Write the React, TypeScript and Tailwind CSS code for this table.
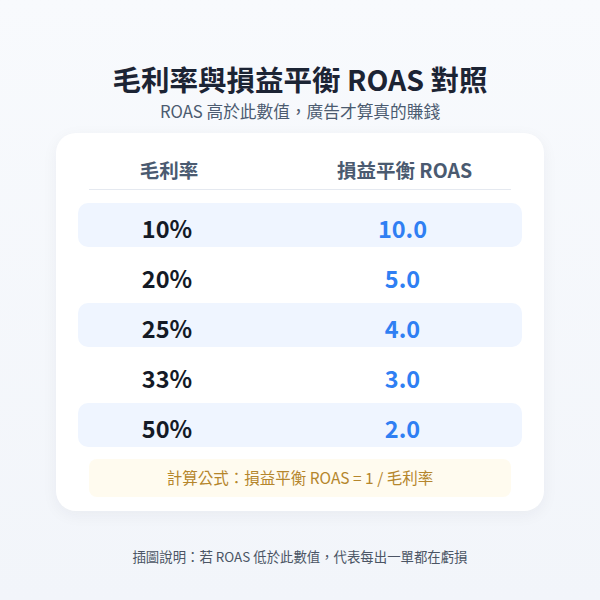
const ROWS = [
  { margin: "10%", roas: "10.0", shaded: true },
  { margin: "20%", roas: "5.0", shaded: false },
  { margin: "25%", roas: "4.0", shaded: true },
  { margin: "33%", roas: "3.0", shaded: false },
  { margin: "50%", roas: "2.0", shaded: true },
];

export default function App() {
  return (
    <div
      className="flex h-[600px] w-[600px] flex-col items-center bg-gradient-to-b from-[#f8fafd] to-[#f2f5fa] pt-[61px]"
      style={{ fontFamily: '"Noto Sans CJK TC", "Noto Sans", sans-serif' }}
    >
      <h1 className="text-[28.5px] font-bold leading-[36px] text-[#1c2434]">
        毛利率與損益平衡 ROAS 對照
      </h1>
      <p className="mt-[2px] text-[16.7px] leading-[24px] text-[#4b5b70]">
        ROAS 高於此數值，廣告才算真的賺錢
      </p>

      <div className="mt-[10px] w-[488px] rounded-[20px] bg-white px-[22px] pb-[14px] pt-[23px] shadow-[0_4px_16px_rgba(30,41,59,0.05)]">
        <div className="flex text-[19.5px] font-semibold leading-[28px] text-[#4a5a70]">
          <div className="w-[182px] text-center">毛利率</div>
          <div className="flex-1 pl-[27px] text-center">損益平衡 ROAS</div>
        </div>
        <div className="mx-[11px] mt-[5px] h-px bg-[#e5e9f0]" />

        <div className="mt-[13px] flex flex-col gap-[6px]">
          {ROWS.map((r) => (
            <div
              key={r.margin}
              className={`flex h-[44px] items-center rounded-[10px] pt-[7px] text-[23.5px] font-semibold ${
                r.shaded ? "bg-[#eff5ff]" : ""
              }`}
            >
              <div className="w-[178px] text-center text-[#141a26]">{r.margin}</div>
              <div className="flex-1 pl-[27px] text-center text-[#2f7ff3]">{r.roas}</div>
            </div>
          ))}
        </div>

        <div className="mx-[11px] mt-[12px] flex h-[38px] items-center justify-center rounded-[8px] bg-[#fffbef] text-[15.5px] text-[#b5862c]">
          計算公式：損益平衡 ROAS = 1 / 毛利率
        </div>
      </div>

      <p className="mt-[35px] text-[13.4px] leading-[20px] text-[#4b5565]">
        插圖說明：若 ROAS 低於此數值，代表每出一單都在虧損
      </p>
    </div>
  );
}
